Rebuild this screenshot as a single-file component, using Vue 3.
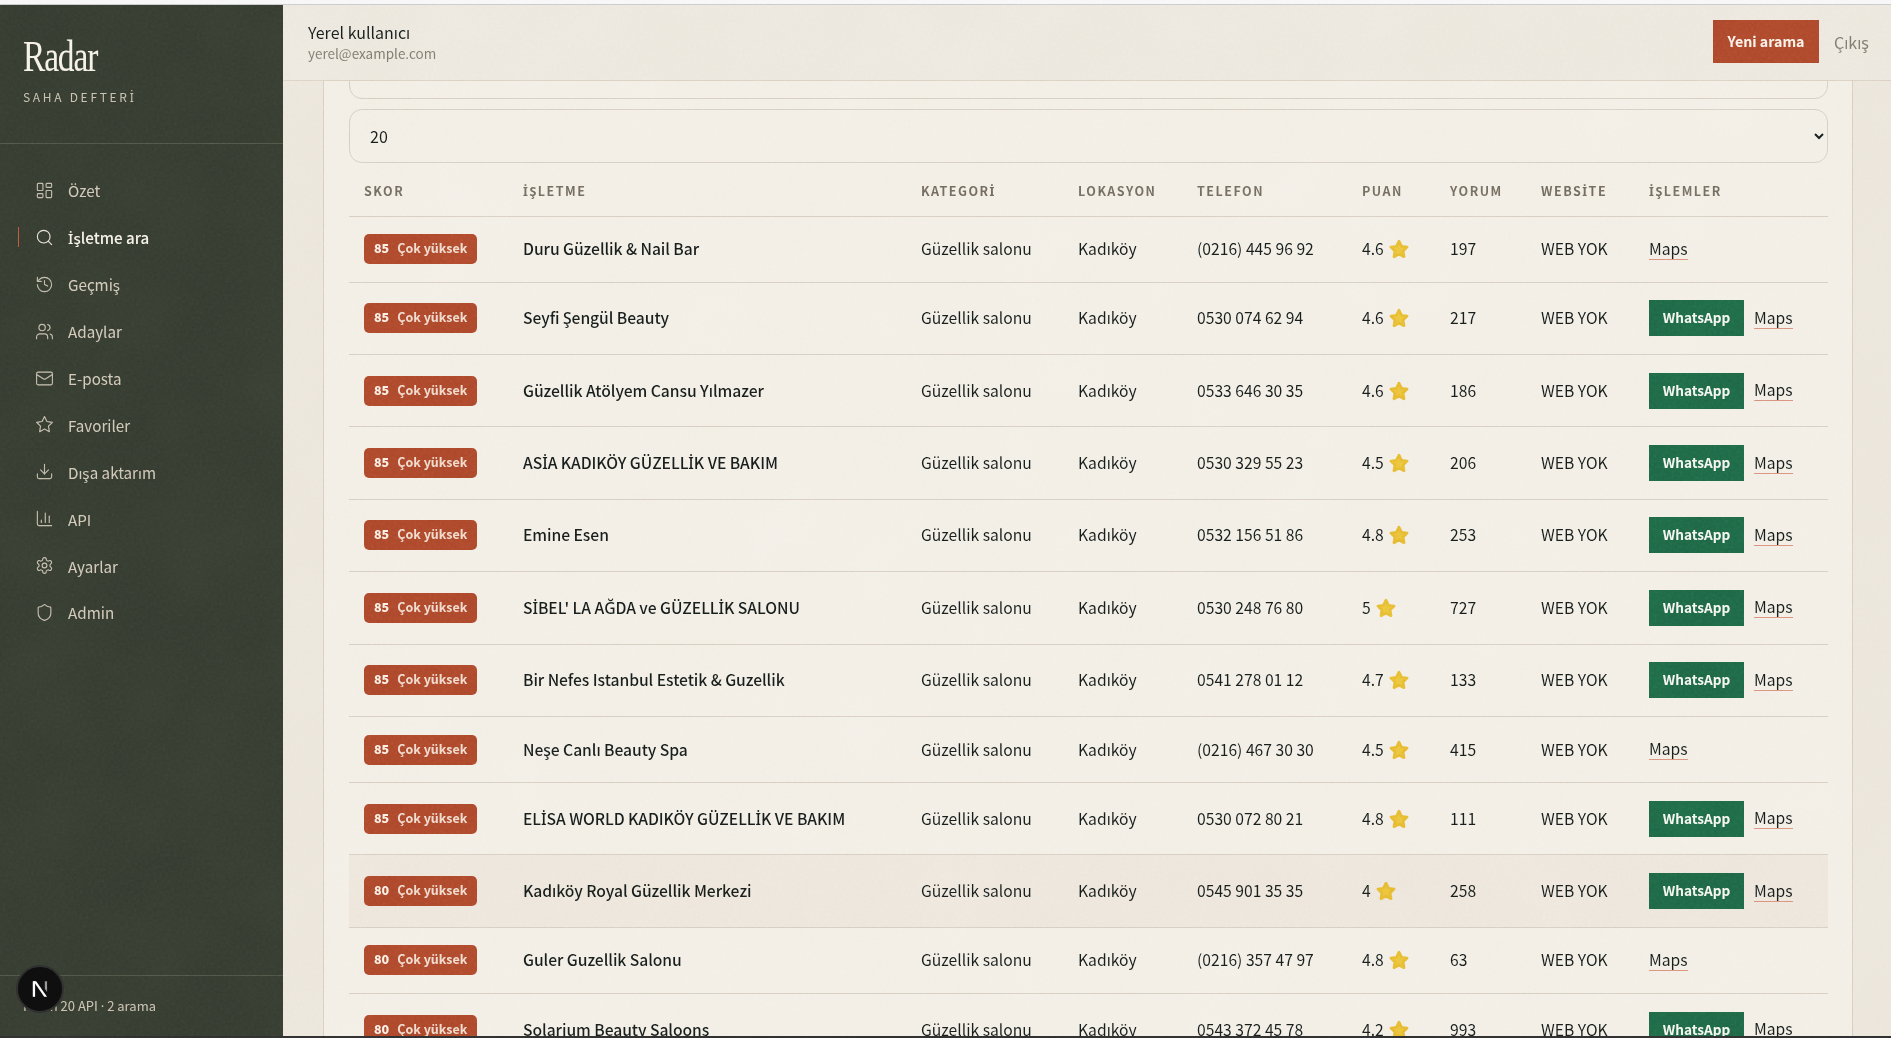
<template>
  <div class="shell">
    <div class="top-strip"></div>
    <div class="layout">
      <aside class="sidebar">
        <div class="brand">
          <div class="logo">Radar</div>
          <div class="tagline"><TrText text="SAHA DEFTERİ" /></div>
        </div>
        <nav class="nav">
          <a
            v-for="item in navItems"
            :key="item.label"
            :class="['nav-item', { active: item.label === 'İşletme ara' }]"
          >
            <svg class="nav-icon" viewBox="0 0 24 24" fill="none" stroke="currentColor" stroke-width="1.4" stroke-linecap="round" stroke-linejoin="round" v-html="item.icon"></svg>
            <span><TrText :text="item.label" /></span>
          </a>
        </nav>
        <div class="side-footer"><TrText text="Kalan 20 API · 2 arama" /></div>
        <div class="next-badge">
          <svg viewBox="0 0 20 20" width="24" height="24">
            <path d="M4 3.5h1.9v13H4z" fill="#fff" />
            <path d="M4.6 3.5h2.2l9 13h-2.3z" fill="#fff" />
            <path d="M14 3.5h1.9v9l-1.9-2.7z" fill="#8c8c8c" />
          </svg>
        </div>
      </aside>

      <main class="main">
        <header class="topbar">
          <div class="user">
            <div class="user-name">Yerel kullanıcı</div>
            <div class="user-mail">yerel@example.com</div>
          </div>
          <div class="top-actions">
            <button type="button" class="new-search">Yeni arama</button>
            <a class="logout">Çıkış</a>
          </div>
        </header>

        <div class="content">
          <section class="card">
            <input class="field" type="text" value="" />
            <select class="field limit">
              <option>20</option>
              <option>40</option>
              <option>60</option>
            </select>

            <table class="results">
              <colgroup>
                <col v-for="w in colWidths" :key="w.name" :style="{ width: w.px + 'px' }" />
              </colgroup>
              <thead>
                <tr>
                  <th v-for="w in colWidths" :key="w.name"><TrText :text="w.name" /></th>
                </tr>
              </thead>
              <tbody>
                <tr
                  v-for="row in rows"
                  :key="row.name"
                  :class="{ hovered: row.name.startsWith('Kadıköy Royal'), tall: row.wa }"
                >
                  <td>
                    <span class="score"><b>{{ row.score }}</b><span>Çok yüksek</span></span>
                  </td>
                  <td class="name"><TrText :text="row.name" /></td>
                  <td>Güzellik salonu</td>
                  <td>Kadıköy</td>
                  <td>{{ row.phone }}</td>
                  <td>
                    <span class="rating">
                      {{ row.rating }}
                      <svg class="star" viewBox="0 0 24 24">
                        <polygon points="12,3.5 14.8,9 20.8,9.9 16.4,14.2 17.5,20.4 12,17.4 6.5,20.4 7.6,14.2 3.2,9.9 9.2,9" fill="#ecc13a" stroke="#e5b830" stroke-width="3" stroke-linejoin="round" />
                      </svg>
                    </span>
                  </td>
                  <td>{{ row.reviews }}</td>
                  <td>WEB YOK</td>
                  <td>
                    <div class="actions">
                      <a v-if="row.wa" class="whatsapp">WhatsApp</a>
                      <a class="maps">Maps</a>
                    </div>
                  </td>
                </tr>
              </tbody>
            </table>
          </section>
        </div>
      </main>
    </div>
    <div class="bottom-strip"></div>

    <svg class="grain" width="100%" height="100%" aria-hidden="true">
      <filter id="fine"><feTurbulence type="fractalNoise" baseFrequency="0.35" numOctaves="3" seed="4" /><feColorMatrix type="saturate" values="0" /></filter>
      <filter id="soft"><feTurbulence type="fractalNoise" baseFrequency="0.012" numOctaves="3" seed="9" /><feColorMatrix type="saturate" values="0" /></filter>
      <rect width="100%" height="100%" filter="url(#soft)" opacity="0.18" />
      <rect width="100%" height="100%" filter="url(#fine)" opacity="0.25" />
    </svg>
  </div>
</template>

<script setup>
import { h } from 'vue'

// the CJK font has no İ or proper middle dot, so those two come from Noto Sans
const TrText = (props) =>
  props.text.split(/([İ·])/).map((part) =>
    part === 'İ' || part === '·' ? h('span', { class: 'latin-fallback' }, part) : part
  )
TrText.props = ['text']

const navItems = [
  { label: 'Özet', icon: '<rect width="7" height="9" x="3" y="3" rx="1"/><rect width="7" height="5" x="14" y="3" rx="1"/><rect width="7" height="9" x="14" y="12" rx="1"/><rect width="7" height="5" x="3" y="16" rx="1"/>' },
  { label: 'İşletme ara', icon: '<circle cx="11" cy="11" r="8"/><path d="m21 21-4.3-4.3"/>' },
  { label: 'Geçmiş', icon: '<path d="M3 12a9 9 0 1 0 9-9 9.75 9.75 0 0 0-6.74 2.74L3 8"/><path d="M3 3v5h5"/><path d="M12 7v5l4 2"/>' },
  { label: 'Adaylar', icon: '<path d="M16 21v-2a4 4 0 0 0-4-4H6a4 4 0 0 0-4 4v2"/><circle cx="9" cy="7" r="4"/><path d="M22 21v-2a4 4 0 0 0-3-3.87"/><path d="M16 3.13a4 4 0 0 1 0 7.75"/>' },
  { label: 'E-posta', icon: '<rect width="20" height="16" x="2" y="4" rx="2"/><path d="m22 7-8.97 5.7a1.94 1.94 0 0 1-2.06 0L2 7"/>' },
  { label: 'Favoriler', icon: '<polygon points="12 2 15.09 8.26 22 9.27 17 14.14 18.18 21.02 12 17.77 5.82 21.02 7 14.14 2 9.27 8.91 8.26 12 2"/>' },
  { label: 'Dışa aktarım', icon: '<path d="M21 15v4a2 2 0 0 1-2 2H5a2 2 0 0 1-2-2v-4"/><polyline points="7 10 12 15 17 10"/><line x1="12" x2="12" y1="15" y2="3"/>' },
  { label: 'API', icon: '<path d="M3 3v16a2 2 0 0 0 2 2h16"/><path d="M18 17V9"/><path d="M13 17V5"/><path d="M8 17v-3"/>' },
  { label: 'Ayarlar', icon: '<path d="M12.22 2h-.44a2 2 0 0 0-2 2v.18a2 2 0 0 1-1 1.73l-.43.25a2 2 0 0 1-2 0l-.15-.08a2 2 0 0 0-2.73.73l-.22.38a2 2 0 0 0 .73 2.73l.15.1a2 2 0 0 1 1 1.72v.51a2 2 0 0 1-1 1.74l-.15.09a2 2 0 0 0-.73 2.73l.22.38a2 2 0 0 0 2.73.73l.15-.08a2 2 0 0 1 2 0l.43.25a2 2 0 0 1 1 1.73V20a2 2 0 0 0 2 2h.44a2 2 0 0 0 2-2v-.18a2 2 0 0 1 1-1.73l.43-.25a2 2 0 0 1 2 0l.15.08a2 2 0 0 0 2.73-.73l.22-.39a2 2 0 0 0-.73-2.73l-.15-.08a2 2 0 0 1-1-1.74v-.5a2 2 0 0 1 1-1.74l.15-.09a2 2 0 0 0 .73-2.73l-.22-.38a2 2 0 0 0-2.73-.73l-.15.08a2 2 0 0 1-2 0l-.43-.25a2 2 0 0 1-1-1.73V4a2 2 0 0 0-2-2z"/><circle cx="12" cy="12" r="3"/>' },
  { label: 'Admin', icon: '<path d="M20 13c0 5-3.5 7.5-7.66 8.95a1 1 0 0 1-.67-.01C7.5 20.5 4 18 4 13V6a1 1 0 0 1 1-1c2 0 4.5-1.2 6.24-2.72a1.17 1.17 0 0 1 1.52 0C14.51 3.81 17 5 19 5a1 1 0 0 1 1 1z"/>' }
]

const colWidths = [
  { name: 'SKOR', px: 159 },
  { name: 'İŞLETME', px: 398 },
  { name: 'KATEGORİ', px: 157 },
  { name: 'LOKASYON', px: 119 },
  { name: 'TELEFON', px: 165 },
  { name: 'PUAN', px: 88 },
  { name: 'YORUM', px: 91 },
  { name: 'WEBSİTE', px: 108 },
  { name: 'İŞLEMLER', px: 194 }
]

const rows = [
  { score: 85, name: 'Duru Güzellik & Nail Bar', phone: '(0216) 445 96 92', rating: '4.6', reviews: 197, wa: false },
  { score: 85, name: 'Seyfi Şengül Beauty', phone: '0530 074 62 94', rating: '4.6', reviews: 217, wa: true },
  { score: 85, name: 'Güzellik Atölyem Cansu Yılmazer', phone: '0533 646 30 35', rating: '4.6', reviews: 186, wa: true },
  { score: 85, name: 'ASİA KADIKÖY GÜZELLİK VE BAKIM', phone: '0530 329 55 23', rating: '4.5', reviews: 206, wa: true },
  { score: 85, name: 'Emine Esen', phone: '0532 156 51 86', rating: '4.8', reviews: 253, wa: true },
  { score: 85, name: "SİBEL' LA AĞDA ve GÜZELLİK SALONU", phone: '0530 248 76 80', rating: '5', reviews: 727, wa: true },
  { score: 85, name: 'Bir Nefes Istanbul Estetik & Guzellik', phone: '0541 278 01 12', rating: '4.7', reviews: 133, wa: true },
  { score: 85, name: 'Neşe Canlı Beauty Spa', phone: '(0216) 467 30 30', rating: '4.5', reviews: 415, wa: false },
  { score: 85, name: 'ELİSA WORLD KADIKÖY GÜZELLİK VE BAKIM', phone: '0530 072 80 21', rating: '4.8', reviews: 111, wa: true },
  { score: 80, name: 'Kadıköy Royal Güzellik Merkezi', phone: '0545 901 35 35', rating: '4', reviews: 258, wa: true },
  { score: 80, name: 'Guler Guzellik Salonu', phone: '(0216) 357 47 97', rating: '4.8', reviews: 63, wa: false },
  { score: 80, name: 'Solarium Beauty Saloons', phone: '0543 372 45 78', rating: '4.2', reviews: 993, wa: true }
]
</script>

<style>
html, body {
  margin: 0;
  height: 100%;
  overflow: hidden;
}

.latin-fallback {
  font-family: "Noto Sans", sans-serif;
}
</style>

<style scoped>
.shell {
  position: relative;
  height: 1038px;
  display: flex;
  flex-direction: column;
  overflow: hidden;
  font-family: "Noto Sans CJK SC", "Noto Sans", sans-serif;
  color: #161c1a;
  background: #ebe5da;
}

.top-strip {
  height: 4px;
  flex: none;
  background: #f7f7f7;
  border-bottom: 1px solid #c8c8c8;
}

.bottom-strip {
  height: 2px;
  flex: none;
  background: #2e2e2e;
}

.layout {
  flex: 1;
  min-height: 0;
  display: flex;
}

.sidebar {
  position: relative;
  width: 283px;
  flex: none;
  display: flex;
  flex-direction: column;
  background: #343a2f;
}

.brand {
  height: 139px;
  box-sizing: border-box;
  padding: 27px 23px 0;
  border-bottom: 1px solid #4c5446;
}

.logo {
  font-family: "Liberation Serif", serif;
  font-size: 44px;
  line-height: 50px;
  color: #f6f1e6;
  letter-spacing: -1.5px;
  transform: scaleX(0.76);
  transform-origin: left center;
}

.tagline {
  margin-top: 7px;
  font-size: 12px;
  line-height: 16px;
  letter-spacing: 2.7px;
  color: #c6bdab;
}

.nav {
  flex: 1;
  padding-top: 23px;
}

.nav-item {
  position: relative;
  height: 46.9px;
  display: flex;
  align-items: center;
  gap: 14px;
  padding-left: 35px;
  font-size: 15.2px;
  color: #cfc6b5;
}

.nav-item.active {
  color: #f6f1e6;
  font-weight: 500;
}

.nav-item.active::before {
  content: "";
  position: absolute;
  left: 18px;
  top: 13px;
  width: 1px;
  height: 20px;
  background: #c0553a;
}

.nav-icon {
  width: 19px;
  height: 19px;
  flex: none;
  opacity: 0.9;
}

.side-footer {
  height: 61px;
  box-sizing: border-box;
  padding-top: 21px;
  padding-left: 23px;
  border-top: 1px solid #4c5446;
  font-size: 13px;
  line-height: 18px;
  color: #c6bdab;
}

.next-badge {
  position: absolute;
  left: 16px;
  bottom: 23px;
  width: 48px;
  height: 48px;
  box-sizing: border-box;
  display: flex;
  align-items: center;
  justify-content: center;
  border-radius: 50%;
  background: #0d0d0d;
  border: 2px solid #2c2c2c;
  z-index: 2;
}

.main {
  flex: 1;
  min-width: 0;
  display: flex;
  flex-direction: column;
}

.topbar {
  height: 76px;
  flex: none;
  box-sizing: border-box;
  display: flex;
  align-items: center;
  justify-content: space-between;
  padding: 0 22px 2px 25px;
  background: #ece7dd;
  border-bottom: 1px solid #d9cfc1;
  position: relative;
  z-index: 1;
}

.user-name {
  font-size: 16px;
  line-height: 22px;
}

.user-mail {
  font-size: 13.5px;
  line-height: 20px;
  color: #7a7468;
}

.top-actions {
  display: flex;
  align-items: center;
  gap: 15px;
}

.new-search {
  width: 106px;
  height: 43px;
  border: 0;
  padding: 0 0 2px;
  font-family: inherit;
  font-size: 14.2px;
  font-weight: 700;
  color: #fbf1e8;
  background: #a9452a;
}

.logout {
  font-size: 16px;
  color: #7a7468;
}

.content {
  flex: 1;
  min-height: 0;
  overflow: hidden;
  padding: 0 38px 0 40px;
}

.card {
  margin-top: -36px;
  padding: 0 24px 0 25px;
  background: #f2eee5;
  border-left: 1px solid #d5ccbf;
  border-right: 1px solid #d5ccbf;
}

.field {
  display: block;
  width: 100%;
  height: 54px;
  box-sizing: border-box;
  padding: 0 20px;
  border: 1px solid #d5ccbf;
  border-radius: 13px;
  background: transparent;
  font-family: inherit;
  font-size: 16px;
  color: #161c1a;
}

.limit {
  margin-top: 10px;
  padding: 0 16px;
}

.results {
  width: 100%;
  table-layout: fixed;
  border-collapse: collapse;
}

th {
  height: 53px;
  padding: 2px 0 0 15px;
  box-sizing: border-box;
  text-align: left;
  font-size: 12.5px;
  font-weight: 700;
  letter-spacing: 1.5px;
  color: #6d665a;
  border-bottom: 1px solid #d5ccbf;
}

td {
  height: 65px;
  padding: 0 0 0 15px;
  font-size: 15.68px;
  line-height: 22px;
  white-space: nowrap;
  border-bottom: 1px solid #d5ccbf;
}

tr.tall td {
  height: 71.43px;
}

tr.hovered td {
  background: #ede5da;
}

td.name {
  font-weight: 500;
  letter-spacing: -0.06px;
}

.score {
  display: inline-flex;
  align-items: center;
  gap: 8px;
  width: 113px;
  height: 30px;
  box-sizing: border-box;
  padding: 0 10px 2px;
  border-radius: 5px;
  background: #a9452a;
  font-size: 12.5px;
  font-weight: 700;
  line-height: 18px;
  color: #f0d9ca;
  vertical-align: middle;
}

.score b {
  color: #fbeee4;
}

.rating {
  display: inline-flex;
  align-items: center;
  gap: 4px;
}

.star {
  width: 22px;
  height: 22px;
}

.actions {
  display: flex;
  align-items: center;
  gap: 10px;
}

.whatsapp {
  width: 95px;
  height: 36px;
  box-sizing: border-box;
  padding-bottom: 2px;
  display: flex;
  align-items: center;
  justify-content: center;
  background: #1e6444;
  color: #f3f7ef;
  font-size: 13.6px;
  font-weight: 700;
}

.maps {
  line-height: 20px;
  border-bottom: 1px solid #d98d78;
}

.grain {
  position: absolute;
  left: 0;
  top: 0;
  pointer-events: none;
  z-index: 5;
  mix-blend-mode: overlay;
}
</style>
